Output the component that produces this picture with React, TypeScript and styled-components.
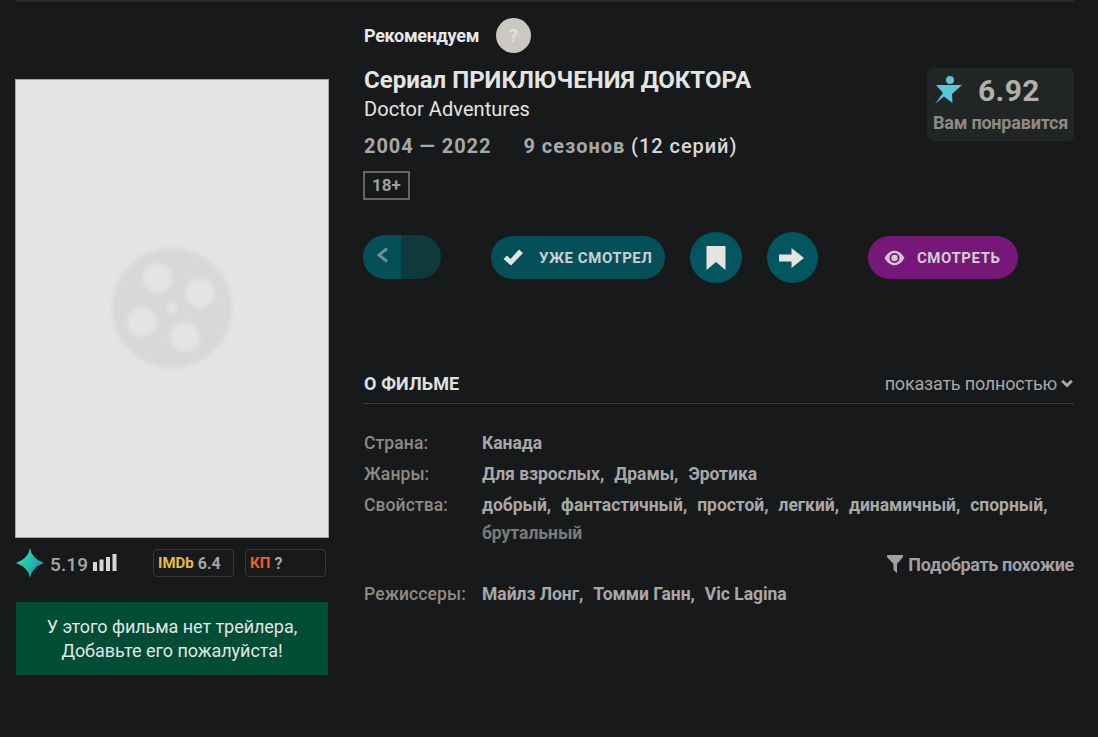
import React from "react";
import styled, { createGlobalStyle } from "styled-components";

const Global = createGlobalStyle`
  html, body { margin: 0; padding: 0; background: #18191b; }
  body { font-family: Roboto, "Liberation Sans", sans-serif; width: 1098px; height: 737px; overflow: hidden; }
`;

const Shell = styled.div`
  padding-left: 15px;
  height: 737px;
  box-sizing: border-box;
`;

const TopRule = styled.div`
  height: 2px;
  width: 1058px;
  margin-left: 1px;
  background: #26282a;
`;

const Page = styled.div`
  display: grid;
  grid-template-columns: 314px 711px;
  column-gap: 34px;
`;

const Left = styled.aside`
  padding-top: 77px;
  display: flex;
  flex-direction: column;
`;

const Poster = styled.div`
  width: 314px;
  height: 459px;
  box-sizing: border-box;
  background: #e4e4e4;
  border: 1px solid #a9a69c;
  display: flex;
  align-items: center;
  justify-content: center;
`;

const Ratings = styled.div`
  display: flex;
  align-items: center;
  height: 28px;
  margin-top: 11px;
  padding-left: 1px;
`;

const StarIcon = styled.svg`
  width: 28px;
  height: 30px;
  flex: none;
`;

const SiteScore = styled.span`
  font-size: 19px;
  font-weight: 500;
  color: #a6a6a6;
  margin-left: 6px;
  margin-top: 3px;
  letter-spacing: 0.1px;
`;

const Bars = styled.svg`
  width: 24px;
  height: 18px;
  margin-left: 5px;
  flex: none;
`;

const Chip = styled.div<{ $ml: number }>`
  width: 81px;
  height: 28px;
  box-sizing: border-box;
  border: 1px solid #36383a;
  border-radius: 4px;
  padding-left: 4px;
  display: flex;
  align-items: center;
  gap: 4px;
  font-size: 16px;
  font-weight: 700;
  color: #a6a6a6;
  margin-left: ${(p) => p.$ml}px;
`;

const ChipBrand = styled.span<{ $c: string }>`
  color: ${(p) => p.$c};
  font-size: 15px;
`;

const Trailer = styled.div`
  width: 312px;
  height: 73px;
  margin: 25px 0 0 1px;
  background: #004d36;
  color: #e4e4e4;
  font-size: 18px;
  letter-spacing: -0.05px;
  line-height: 24px;
  text-align: center;
  display: flex;
  flex-direction: column;
  justify-content: center;
`;

const Right = styled.main`
  display: flex;
  flex-direction: column;
`;

const RecRow = styled.div`
  display: flex;
  align-items: center;
  height: 36px;
  margin-top: 15px;
  padding-left: 1px;
`;

const RecLabel = styled.span`
  font-size: 18px;
  font-weight: 700;
  color: #e8e8e8;
  letter-spacing: -0.3px;
`;

const Question = styled.span`
  width: 35px;
  height: 35px;
  border-radius: 50%;
  background: #cbc7c1;
  color: #e3e0dc;
  font-size: 18px;
  font-weight: 700;
  display: flex;
  align-items: center;
  justify-content: center;
  margin-left: 17px;
`;

const Head = styled.div`
  display: flex;
  justify-content: space-between;
  align-items: flex-start;
`;

const HeadText = styled.div`
  padding-left: 1px;
`;

const Title = styled.h1`
  margin: 13px 0 0;
  font-size: 24px;
  line-height: 28px;
  font-weight: 700;
  color: #e4e4e4;
`;

const Original = styled.div`
  font-size: 20px;
  line-height: 26px;
  margin-top: 2px;
  color: #e4e4e4;
  font-weight: 400;
  letter-spacing: 0.05px;
`;

const Meta = styled.div`
  display: flex;
  font-size: 20px;
  line-height: 26px;
  margin-top: 11px;
  letter-spacing: 0.95px;
  font-weight: 700;
  color: #a8a8a8;
`;

const Seasons = styled.span`
  margin-left: 32px;
`;

const Light = styled.span`
  font-weight: 500;
  color: #d8d8d8;
`;

const Age = styled.span`
  display: block;
  box-sizing: border-box;
  height: 29px;
  width: 47px;
  margin-top: 12px;
  margin-left: -1px;
  border: 2px solid #6a665c;
  font-size: 17px;
  line-height: 25px;
  font-weight: 700;
  color: #a0a0a0;
  text-align: center;
`;

const Match = styled.div`
  width: 147px;
  height: 73px;
  margin-top: 15px;
  box-sizing: border-box;
  background: #222526;
  border-radius: 6px;
  display: flex;
  flex-direction: column;
  align-items: center;
`;

const MatchTop = styled.div`
  display: flex;
  align-items: center;
  height: 45px;
  width: 100%;
  padding-left: 8px;
  box-sizing: border-box;
`;

const MatchScore = styled.span`
  font-size: 30px;
  font-weight: 700;
  color: #b0b0b0;
  margin-left: 15px;
  letter-spacing: 0.4px;
`;

const MatchLabel = styled.span`
  font-size: 18px;
  font-weight: 700;
  color: #8f8a82;
  letter-spacing: -0.2px;
  line-height: 20px;
`;

const Actions = styled.div`
  display: flex;
  align-items: center;
  height: 51px;
  margin-top: 32px;
`;

const Toggle = styled.div`
  width: 78px;
  height: 44px;
  margin-bottom: 1px;
  border-radius: 22px;
  overflow: hidden;
  display: flex;
`;

const ToggleLeft = styled.div`
  width: 38px;
  background: #045059;
  display: flex;
  align-items: center;
  justify-content: center;
  padding-bottom: 4px;
  box-sizing: border-box;
`;

const ToggleRight = styled.div`
  flex: 1;
  background: #0e3a3e;
`;

const Pill = styled.button<{ $bg: string; $w: number; $ml: number }>`
  width: ${(p) => p.$w}px;
  height: 43px;
  margin: 0 0 0 ${(p) => p.$ml}px;
  padding: 0;
  border: 0;
  border-radius: 22px;
  background: ${(p) => p.$bg};
  color: #cfcfcf;
  font-family: inherit;
  font-size: 15px;
  font-weight: 700;
  letter-spacing: 0.55px;
  display: flex;
  align-items: center;
`;

const Round = styled.button<{ $ml: number; $s: number }>`
  width: ${(p) => p.$s}px;
  height: 51px;
  margin-left: ${(p) => p.$ml}px;
  padding: 0;
  border: 0;
  border-radius: 50%;
  background: #01565f;
  display: flex;
  align-items: center;
  justify-content: center;
`;

const PillIcon = styled.svg<{ $ml: number; $mr: number }>`
  margin-left: ${(p) => p.$ml}px;
  margin-right: ${(p) => p.$mr}px;
  flex: none;
`;

const AboutHead = styled.div`
  display: flex;
  justify-content: space-between;
  align-items: center;
  height: 40px;
  margin-top: 80px;
  border-bottom: 1px solid #3a3b3d;
`;

const AboutTitle = styled.h2`
  margin: 0 0 0 1px;
  font-size: 18px;
  font-weight: 700;
  color: #e0e0e0;
  letter-spacing: 0.15px;
`;

const ShowAll = styled.span`
  display: flex;
  align-items: center;
  font-size: 18px;
  color: #a8a8a8;
  letter-spacing: -0.2px;
  gap: 4px;
  padding-right: 1px;
`;

const Info = styled.div`
  margin-top: 25px;
  padding-left: 1px;
`;

const Row = styled.div`
  display: grid;
  grid-template-columns: 118px 1fr;
  font-size: 17.5px;
  line-height: 28px;
  font-weight: 500;
  margin-bottom: 3px;
`;

const Key = styled.span`
  color: #8f8a82;
  letter-spacing: 0.1px;
`;

const Values = styled.div`
  display: flex;
  flex-wrap: wrap;
  column-gap: 10px;
  font-weight: 700;
  letter-spacing: -0.03px;
`;

const Value = styled.span<{ $dim?: boolean }>`
  color: ${(p) => (p.$dim ? "#7b7b7b" : "#a8a8a8")};
`;

const Similar = styled.div`
  display: flex;
  justify-content: flex-end;
  align-items: center;
  gap: 5px;
  height: 24px;
  margin: 5px 0 4px;
  font-size: 18px;
  font-weight: 700;
  color: #a0a0a0;
  letter-spacing: -0.35px;
`;

const tags = ["добрый", "фантастичный", "простой", "легкий", "динамичный", "спорный"];

const ValueList = ({ items }: { items: string[] }) => (
  <Values>
    {items.map((t, i) => (
      <Value key={t}>{t + (i < items.length - 1 ? "," : "")}</Value>
    ))}
  </Values>
);

export default function App() {
  return (
    <>
      <Global />
      <Shell>
        <TopRule />
        <Page>
          <Left>
            <Poster>
              <svg width="140" height="140" viewBox="0 0 140 140">
                <defs>
                  <filter id="soft" x="-10%" y="-10%" width="120%" height="120%">
                    <feGaussianBlur stdDeviation="2.2" />
                  </filter>
                  <mask id="reel">
                    <rect width="140" height="140" fill="#fff" />
                    <g fill="#000">
                      <circle cx="55" cy="39" r="14.5" />
                      <circle cx="98" cy="54" r="14.5" />
                      <circle cx="40" cy="83" r="14.5" />
                      <circle cx="83" cy="98" r="14.5" />
                      <circle cx="70" cy="69" r="6.5" />
                    </g>
                  </mask>
                </defs>
                <g filter="url(#soft)">
                  <circle cx="70" cy="69" r="60" fill="#d8d8d8" mask="url(#reel)" />
                </g>
              </svg>
            </Poster>
            <Ratings>
              <StarIcon viewBox="0 0 28 30">
                <defs>
                  <linearGradient id="st" x1="0" y1="0.2" x2="1" y2="0.9">
                    <stop offset="0" stopColor="#35e2ab" />
                    <stop offset="0.55" stopColor="#22b8b0" />
                    <stop offset="1" stopColor="#1a78a8" />
                  </linearGradient>
                </defs>
                <path d="M14 0 Q15.5 10.5 28 15 Q15.5 19.5 14 30 Q12.5 19.5 0 15 Q12.5 10.5 14 0Z" fill="url(#st)" />
              </StarIcon>
              <SiteScore>5.19</SiteScore>
              <Bars viewBox="0 0 24 18">
                <g fill="#d8d8d8">
                  <rect x="0" y="8" width="4" height="9" />
                  <rect x="6.5" y="5.5" width="4" height="11.5" />
                  <rect x="13" y="3" width="4" height="14" />
                  <rect x="19.5" y="0" width="4" height="17" />
                </g>
              </Bars>
              <Chip $ml={36}>
                <ChipBrand $c="#e8bd3c">IMDb</ChipBrand>6.4
              </Chip>
              <Chip $ml={11}>
                <ChipBrand $c="#f0611a">КП</ChipBrand>?
              </Chip>
            </Ratings>
            <Trailer>
              <div>У этого фильма нет трейлера,</div>
              <div>Добавьте его пожалуйста!</div>
            </Trailer>
          </Left>
          <Right>
            <RecRow>
              <RecLabel>Рекомендуем</RecLabel>
              <Question>?</Question>
            </RecRow>
            <Head>
              <HeadText>
                <Title>Сериал ПРИКЛЮЧЕНИЯ ДОКТОРА</Title>
                <Original>Doctor Adventures</Original>
                <Meta>
                  <span>2004 — 2022</span>
                  <Seasons>
                    9 сезонов <Light>(12 серий)</Light>
                  </Seasons>
                </Meta>
                <Age>18+</Age>
              </HeadText>
              <Match>
                <MatchTop>
                  <svg width="28" height="29" viewBox="0 0 28 29">
                    <circle cx="15" cy="4" r="4" fill="#56c8d8" />
                    <path d="M1 9 L27 9 L17 18 L17.5 27 L9 20.5 L0 28 L8 17 Z" fill="#56c8d8" />
                  </svg>
                  <MatchScore>6.92</MatchScore>
                </MatchTop>
                <MatchLabel>Вам понравится</MatchLabel>
              </Match>
            </Head>
            <Actions>
              <Toggle>
                <ToggleLeft>
                  <svg width="13" height="16" viewBox="0 0 13 16">
                    <path d="M11 1.5 L3 8 L11 14.5" fill="none" stroke="#6e8e90" strokeWidth="3" />
                  </svg>
                </ToggleLeft>
                <ToggleRight />
              </Toggle>
              <Pill $bg="#045059" $w={174} $ml={50}>
                <PillIcon $ml={12} $mr={16} width="20" height="17" viewBox="0 0 20 17">
                  <path d="M0.5 10 L4 6.5 L7.5 10 L16 0.5 L20 4 L8 16.5 Z" fill="#e4e4e4" />
                </PillIcon>
                УЖЕ СМОТРЕЛ
              </Pill>
              <Round $ml={25} $s={52}>
                <svg width="20" height="24" viewBox="0 0 20 24">
                  <path d="M0.5 0 H19.5 V24 L10 16 L0.5 24 Z" fill="#e6e4e0" />
                </svg>
              </Round>
              <Round $ml={25} $s={51}>
                <svg width="27" height="20" viewBox="0 0 27 20">
                  <path d="M0 6.5 H12.5 V0 L25 10 L12.5 20 V13.5 H0 Z" fill="#e6e4e0" />
                </svg>
              </Round>
              <Pill $bg="#771777" $w={150} $ml={50}>
                <PillIcon $ml={16} $mr={12} width="21" height="16" viewBox="0 0 21 16">
                  <path d="M0.5 8 C4 2 8 0.8 10.5 0.8 C13 0.8 17 2 20.5 8 C17 14 13 15.2 10.5 15.2 C8 15.2 4 14 0.5 8Z" fill="#d4c4d4" />
                  <circle cx="10.5" cy="8" r="5" fill="#771777" />
                  <circle cx="10.5" cy="8" r="3.2" fill="#d4c4d4" />
                </PillIcon>
                СМОТРЕТЬ
              </Pill>
            </Actions>
            <AboutHead>
              <AboutTitle>О ФИЛЬМЕ</AboutTitle>
              <ShowAll>
                показать полностью
                <svg width="12" height="9" viewBox="0 0 12 9">
                  <path d="M1.2 1.8 L6 6.5 L10.8 1.8" fill="none" stroke="#a8a8a8" strokeWidth="3" />
                </svg>
              </ShowAll>
            </AboutHead>
            <Info>
              <Row>
                <Key>Страна:</Key>
                <ValueList items={["Канада"]} />
              </Row>
              <Row>
                <Key>Жанры:</Key>
                <ValueList items={["Для взрослых", "Драмы", "Эротика"]} />
              </Row>
              <Row>
                <Key>Свойства:</Key>
                <Values>
                  {tags.map((t) => (
                    <Value key={t}>{t},</Value>
                  ))}
                  <Value $dim>брутальный</Value>
                </Values>
              </Row>
              <Similar>
                <svg width="16" height="18" viewBox="0 0 16 18">
                  <path d="M0 0 H16 V2 L10 9 V18 L6.5 15 V9 L0 2 Z" fill="#a0a0a0" />
                </svg>
                Подобрать похожие
              </Similar>
              <Row>
                <Key>Режиссеры:</Key>
                <ValueList items={["Майлз Лонг", "Томми Ганн", "Vic Lagina"]} />
              </Row>
            </Info>
          </Right>
        </Page>
      </Shell>
    </>
  );
}
